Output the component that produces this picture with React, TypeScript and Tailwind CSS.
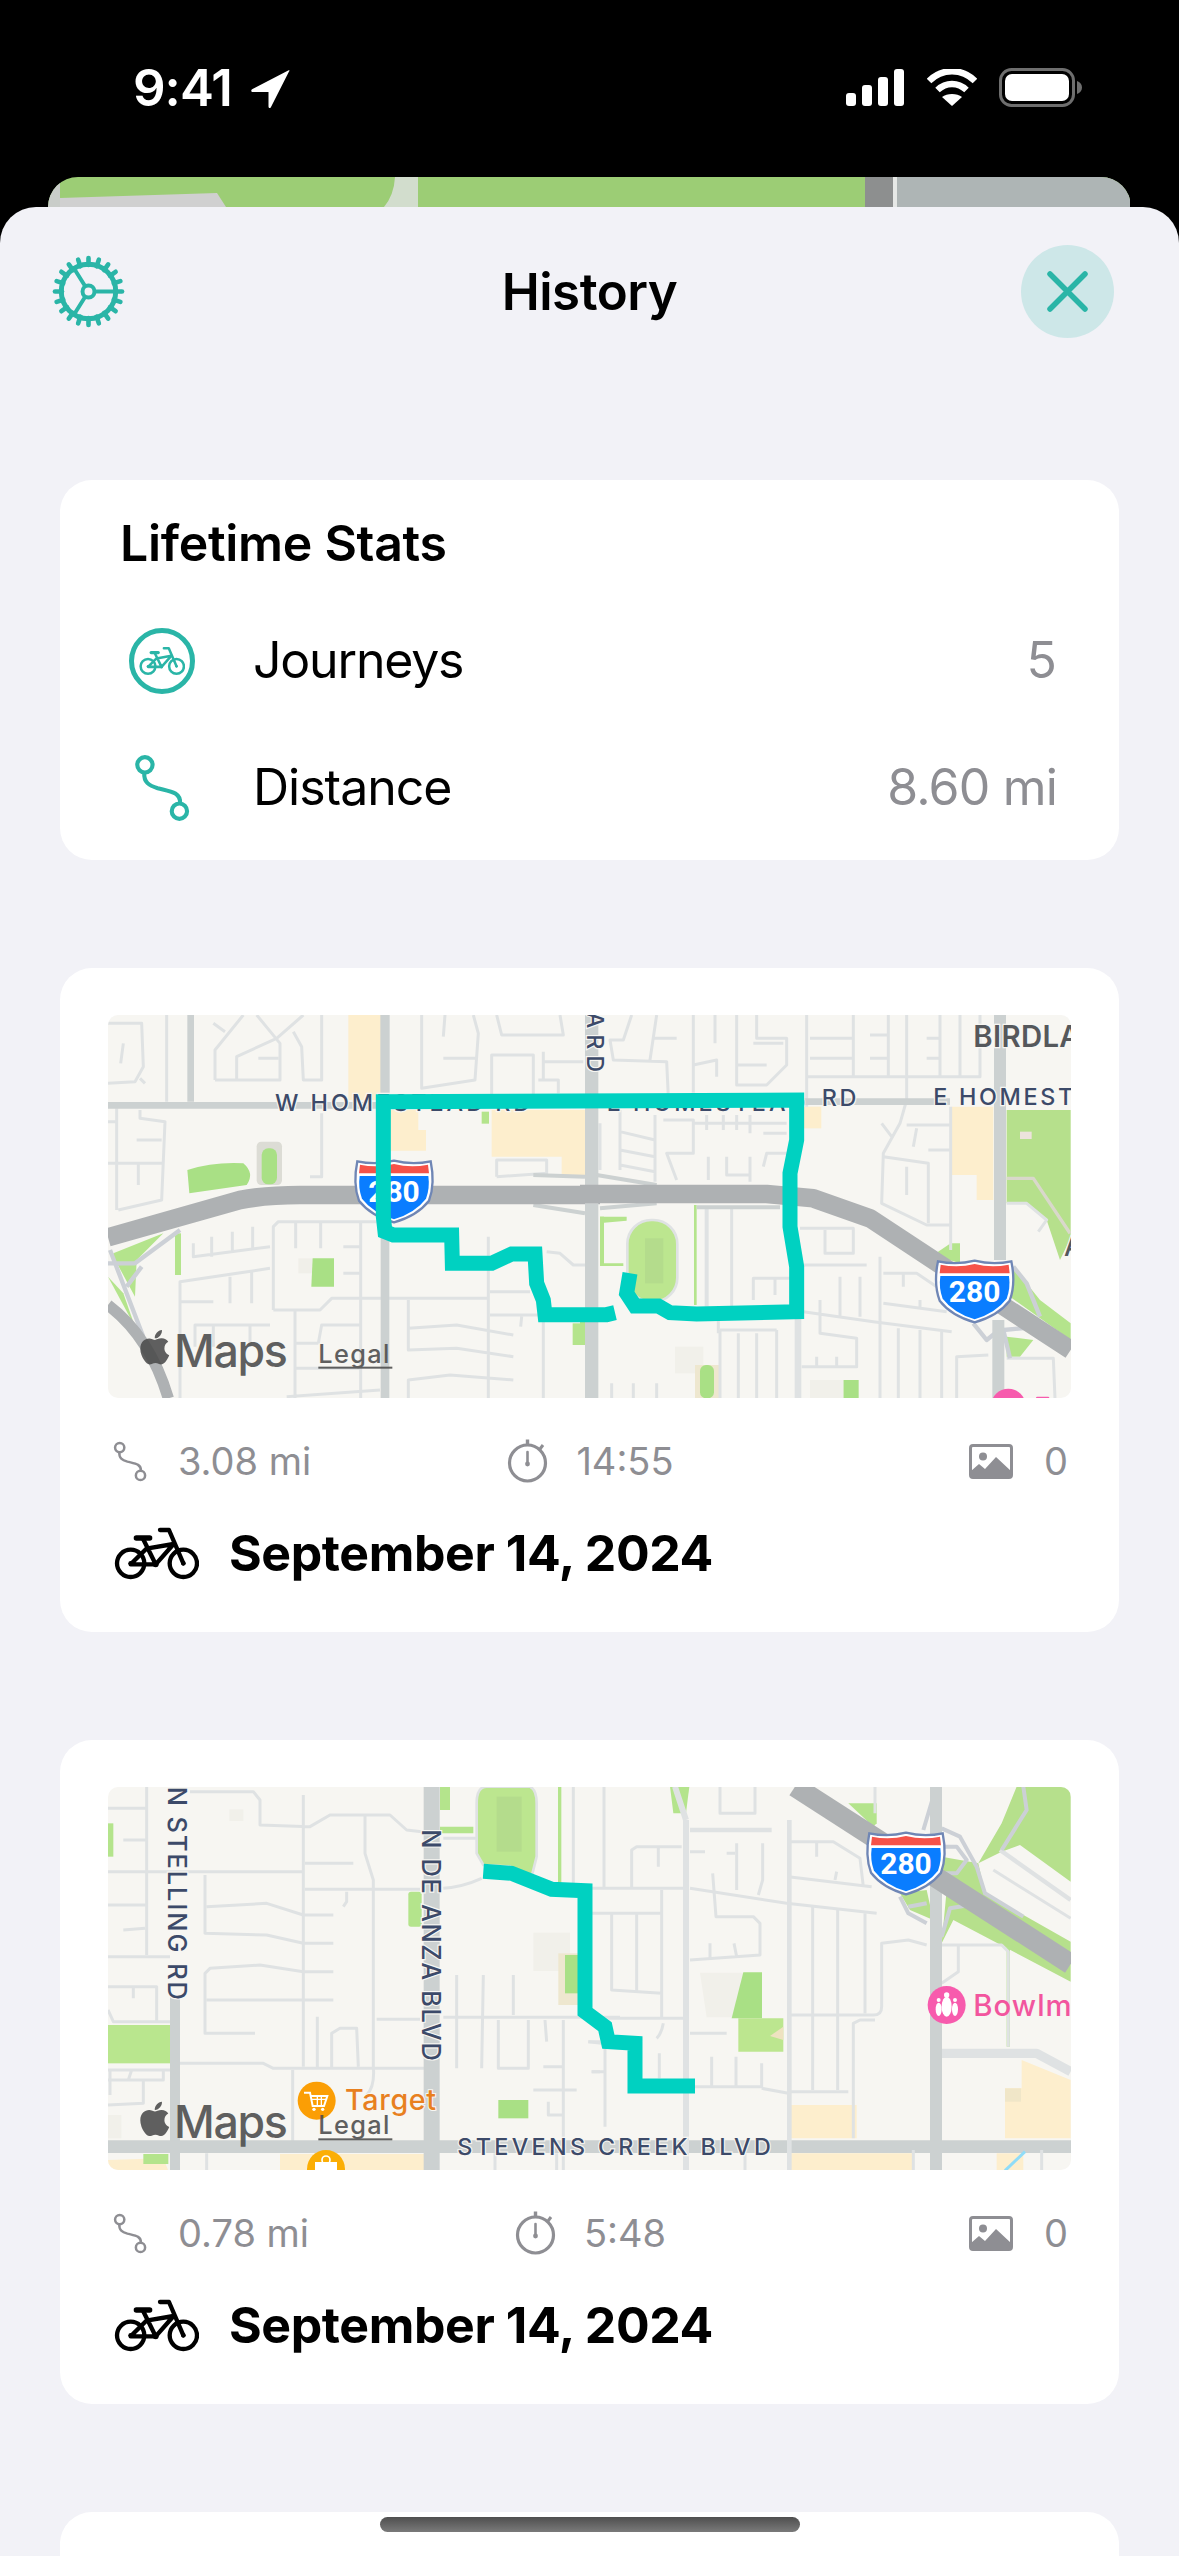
import type { ReactNode } from "react";

const TEAL = "#2ab5a7";
const ROUTE = "#00d1c1";
const MINOR = "#dfe2e3";
const MAJOR = "#ccd1d1";
const HIGHWAY = "#aeb1b3";
const GREEN = "#b4e48c";
const LOT = "#fdeecd";
const LABEL = "#3c4a69";
const LAND = "#f7f6f2";

function Road({ d, w = 9, c = MINOR }: { d: string; w?: number; c?: string }) {
  return <path d={d} fill="none" stroke={c} strokeWidth={w} strokeLinejoin="round" />;
}

function Label({ x, y, size = 70, fill = LABEL, spacing = 10, rotate, weight = 500, children }: {
  x: number;
  y: number;
  size?: number;
  fill?: string;
  spacing?: number;
  rotate?: boolean;
  weight?: number;
  children: ReactNode;
}) {
  return (
    <text
      transform={`translate(${x} ${y})${rotate ? " rotate(90)" : ""}`}
      fontFamily="Inter, sans-serif"
      fontSize={size}
      fontWeight={weight}
      letterSpacing={spacing}
      fill={fill}
      stroke={LAND}
      strokeWidth={7}
      paintOrder="stroke"
    >
      {children}
    </text>
  );
}

function Shield({ x, y }: { x: number; y: number }) {
  return (
    <g transform={`translate(${x} ${y})`}>
      <path d="M-110 -88Q-55 -76 0 -90Q55 -76 110 -88Q124 -20 105 30Q70 75 0 95Q-70 75 -105 30Q-124 -20 -110 -88Z" fill="#fff" stroke="#6f86b5" strokeWidth="7" />
      <path d="M-103 -44H103Q108 -8 96 24Q64 66 0 86Q-64 66 -96 24Q-108 -8 -103 -44Z" fill="#0a7dff" />
      <path d="M-102 -78Q-50 -68 0 -80Q50 -68 102 -78L105 -52H-105Z" fill="#f65249" />
      <text x="0" y="33" textAnchor="middle" fontFamily="Roboto, sans-serif" fontWeight={700} fontSize="90" fill="#fff">280</text>
    </g>
  );
}

function MapsMark({ dy }: { dy: number }) {
  return (
    <g transform={`translate(0 ${dy})`} fill="#4b4b4b" opacity="0.88">
      <path
        transform="translate(120 983) scale(0.23)"
        d="M318.7 268.7c-.2-36.7 16.4-64.4 50-84.8-18.8-26.9-47.2-41.7-84.7-44.6-35.5-2.8-74.3 20.7-88.5 20.7-15 0-49.4-19.7-76.4-19.7C63.3 141.2 4 184.8 4 273.5q0 39.3 14.4 81.2c12.8 36.7 59 126.7 107.2 125.2 25.2-.6 43-17.9 75.8-17.9 31.8 0 48.3 17.9 76.4 17.9 48.6-.7 90.4-82.5 102.6-119.3-65.2-30.7-61.7-90-61.7-91.9zm-56.6-164.2c27.3-32.4 24.8-61.9 24-72.5-24.1 1.4-52 16.4-67.9 34.9-17.5 19.8-27.8 44.3-25.6 71.9 26.1 2 49.9-11.4 69.5-34.3z"
      />
      <text x="222" y="1100" fontFamily="Inter, sans-serif" fontWeight={500} fontSize="134" letterSpacing="-4">Maps</text>
      <text x="655" y="1088" fontFamily="Inter, sans-serif" fontWeight={500} fontSize="76" letterSpacing="4">Legal</text>
      <rect x="655" y="1100" width="222" height="6" />
    </g>
  );
}

function RouteLine({ d }: { d: string }) {
  return <path d={d} fill="none" stroke={ROUTE} strokeWidth="45" strokeLinejoin="miter" />;
}

function HomesteadMap() {
  return (
    <svg viewBox="0 0 963 383" className="block h-[383px] w-[963px]">
      <rect width="963" height="383" fill={LAND} />
      <g transform="translate(-8 -15) scale(0.33333)">
        {/* left half */}
        <rect x="745" y="45" width="100" height="255" fill={LOT} />
        <path d="M870 330H955V390H978V452H870Z" fill={LOT} />
        <path d="M1175 330H1455V525L1385 530V470H1175Z" fill={LOT} />
        <path d="M262 510Q340 485 430 490Q465 520 440 555L320 572L268 580Z" fill="#a9e085" />
        <rect x="470" y="425" width="76" height="130" rx="14" fill="#dcdcd5" />
        <rect x="485" y="445" width="46" height="108" rx="20" fill="#a9e085" />
        <rect x="595" y="775" width="45" height="45" fill="#f0efe9" />
        <path d="M638 775H702V860H634Z" fill="#a9e085" />
        <path d="M40 760L190 700L110 780L105 890L40 770Z" fill={GREEN} />
        <path d="M24 830L105 980L70 880Z" fill={GREEN} />
        <rect x="225" y="700" width="18" height="125" fill={GREEN} />
        <rect x="1145" y="335" width="22" height="36" fill={GREEN} />
        <rect x="1418" y="970" width="38" height="65" fill={GREEN} />
        <Road d="M200 45V305M24 250L105 245L130 200L125 70H24M70 130L62 190M120 235L135 250" />
        <Road d="M345 240V150L430 45M345 240H540V130L470 45M410 240V170L530 115L610 45M340 70L375 95M580 95L605 140L610 240H665V45M475 175H535" />
        <Road d="M24 365H50M50 325V630M120 330V355L195 365L185 600L55 630M24 490H190M110 420H185M115 490V555M665 340V530H630" />
        <Road d="M280 730V770L510 740M335 710V770M397 695V755M458 680V745M520 930V680L535 665H830M587 670V745M662 670V745M730 740H780M782 670V1195" />
        <Road d="M240 1195V845L510 805M240 905H340M390 830V910M455 810V910M730 820H780M520 930H660L695 895H1165M285 1040V975H510M340 975V1040M450 975V1040M655 1030L665 975H780M585 1030H655M585 930V1195M585 1105H780M560 1190L840 1170" />
        <Road d="M925 900V1050L1070 1045L1240 1070M925 985L1070 975L1240 1005M925 1195V1140L1050 1125L1240 1140M1165 710V1195M1170 875H1290M1170 945H1330V1195M1340 755L1380 760L1420 795H1455M1265 950L1262 980" />
        <Road d="M965 45V265L1125 240L1135 100L1120 45M1035 45L1030 110M1030 175H1130M1175 300V165H1300V300M1190 45L1205 105H1390L1380 45M1315 240H1375V280M1330 155V240M1330 185H1450M1190 530V480H1340V520L1190 530" />
        <Road d="M24 790H105L240 690M30 750L130 1010M80 860L125 800" w={13} c="#ccd0d6" />
        <Road d="M272 45V305" w={20} c={MAJOR} />
        <Road d="M855 45V560" w={28} c={MAJOR} />
        <Road d="M855 700V1195" w={26} c={MAJOR} />
        <Road d="M24 316H840" w={20} c={MAJOR} />
        <Road d="M1475 45V1195" w={38} c={MAJOR} />
        <Road d="M1300 525L1455 530M1300 615L1455 640" w={12} c={MAJOR} />
        <Road d="M24 712L420 600Q500 585 600 585H1500" w={56} c={HIGHWAY} />
        <Road d="M24 915Q150 1010 205 1195" w={34} c={HIGHWAY} />

        {/* right half, coordinates run from the middle of the map */}
        <g transform="translate(1440 0)">
          <path d="M1280 330H1472V715L1440 780L1400 660L1340 610H1280Z" fill="#b6e08c" />
          <rect x="1320" y="395" width="35" height="22" fill="#ede3dc" />
          <path d="M1115 320H1240V600H1190V525H1115Z" fill={LOT} />
          <rect x="672" y="320" width="52" height="65" fill={LOT} />
          <rect x="0" y="330" width="14" height="190" fill={LOT} />
          <rect x="60" y="650" width="12" height="145" fill={GREEN} />
          <path d="M60 650H140V662L72 668ZM60 790H130V798H60Z" fill={GREEN} />
          <rect x="342" y="615" width="8" height="300" fill={GREEN} />
          <rect x="0" y="960" width="15" height="75" fill={GREEN} />
          <rect x="142" y="660" width="150" height="245" rx="72" fill="#bce68f" stroke={MINOR} strokeWidth="8" />
          <rect x="195" y="715" width="55" height="135" fill="#b4dc8c" />
          <rect x="285" y="1040" width="85" height="80" fill="#f1f0ea" />
          <rect x="345" y="1095" width="75" height="100" fill="#eee7cf" />
          <rect x="360" y="1095" width="42" height="100" rx="18" fill="#a9e085" />
          <rect x="790" y="1140" width="46" height="55" fill="#a9e085" />
          <rect x="690" y="1140" width="100" height="55" fill="#f1f0ea" />
          <path d="M1060 765L1112 730L1140 730V790Z" fill={GREEN} />
          <path d="M1300 800L1380 900L1472 970V1020L1290 890ZM1280 1010L1360 1020L1320 1070H1280Z" fill={GREEN} />
          <Road d="M680 320V45M820 230V45M925 230V45M980 45V300L960 370L910 460L905 610L1040 675H1110M1080 230V45M1140 230V45M1200 45V230H680M690 115H820M690 175H820M870 175H925M870 105H925M1040 115H1080M1040 175H1080" />
          <Road d="M530 45V115H620V195L560 255H470V45M520 130H610M470 195H560M340 45V290M405 45V130M340 195L410 180V230M155 45L130 120H90L100 180L260 185L265 290M230 45L210 180M220 115H290" />
          <Road d="M1112 320V750M980 375H1110M1010 385L1000 440M910 470L1045 490V670M1045 450H1110M980 500V585M905 370L935 410" />
          <Road d="M120 330V510M120 395L225 420M120 450L225 470M120 495L225 515V545M225 345V530M250 360H340V460H260L290 540M340 400V370H620M380 345V390M430 345V390M470 345V390M510 345V400M550 400H620M385 470V540M440 470V525H510V470M550 500L560 460H620M510 525V545M60 370V510" />
          <Road d="M660 685H820V760H735V690M660 795H860M900 770V1195M910 820H1010L1070 860M910 910L1100 935M970 820V860M1020 900V920M520 900V835H630M585 835V885" />
          <Road d="M670 935L880 965L1115 995M720 900V1000L830 1015V1100H665M780 830V950M840 830V950M710 1070V1105M770 1070V1105" />
          <Road d="M420 990H590M420 1195V990M475 1000V1195M530 1000V1195M590 990V1195M955 985V1195M1020 990V1195M1085 995V1195M1130 1195V1070L1225 1065M1280 1075H1420L1425 1195M95 1150V1195M160 1150V1195M230 1150V1195M455 620V920M415 960V1000" />
          <Road d="M380 620V920" w={12} />
          <Road d="M654 950V1195" w={20} />
          <Road d="M1280 535H1360L1470 700" w={10} c="#d9d8cb" />
          <Road d="M1280 610H1340L1400 660L1375 695" />
          <Road d="M1300 800L1340 850L1380 950M1180 970L1220 1020L1270 980M1290 1075L1270 990L1380 980" w={13} c="#ccd0d6" />
          <Road d="M35 45V1195" w={40} c={MAJOR} />
          <Road d="M1260 45V780" w={36} c={MAJOR} />
          <Road d="M1255 960V1195" w={36} c={MAJOR} />
          <Road d="M0 305H1110" w={20} c={MAJOR} />
          <Road d="M50 525L230 555M60 625L230 610M350 622H600" w={12} c={MAJOR} />
          <Road d="M0 582H560L700 595L870 655L1090 800L1472 1050" w={56} c={HIGHWAY} />
          <Label x={80} y={333} spacing={9}>E HOMESTEAD</Label>
          <Label x={725} y={318} spacing={8}>RD</Label>
          <Label x={1060} y={316} spacing={8}>E HOMESTEAD</Label>
          <Label x={1180} y={140} size={88} fill="#55585c" spacing={1} weight={600}>BIRDLAND</Label>
          <Label x={20} y={35} rotate spacing={18}>ARD</Label>
          <Shield x={1184} y={872} />
          <circle cx="1285" cy="1218" r="52" fill="#f75bad" />
          <rect x="1368" y="1190" width="40" height="8" rx="4" fill="#f75bad" />
          <Label x={1452} y={768} fill="#55585c" size={80}>A</Label>
        </g>
        <Label x={525} y={333} spacing={9}>W HOMESTEAD RD</Label>
        <Shield x={882} y={572} />
        <MapsMark dy={0} />
        <RouteLine d="M1545 938L1520 944H1335L1330 900L1310 850L1305 762H1235L1175 790H1057L1055 705H880L855 695L850 650V305L2090 300V420L2070 520V680L2090 800V935L1790 942L1710 938L1675 918H1605L1580 880L1590 820" />
      </g>
    </svg>
  );
}

function StevensCreekMap() {
  return (
    <svg viewBox="0 0 963 383" className="block h-[383px] w-[963px]">
      <rect width="963" height="383" fill={LAND} />
      <g transform="translate(-8 -7) scale(0.33333)">
        {/* left half */}
        <rect x="1020" y="20" width="30" height="70" fill={GREEN} />
        <path d="M1020 140H1120V160H1020Z" fill={GREEN} />
        <path d="M1130 70Q1130 20 1160 20H1290Q1310 30 1310 70V230L1295 290L1230 260L1150 255L1130 220Z" fill="#bce68f" stroke={MINOR} strokeWidth="8" />
        <rect x="1190" y="50" width="75" height="165" fill="#b4dc8c" />
        <rect x="1374" y="20" width="10" height="290" fill={GREEN} />
        <rect x="24" y="130" width="16" height="100" fill={GREEN} />
        <rect x="24" y="735" width="186" height="115" fill="#b9e68e" />
        <rect x="925" y="335" width="40" height="105" rx="8" fill={GREEN} />
        <rect x="1195" y="960" width="90" height="55" fill="#a9e085" />
        <rect x="1300" y="458" width="110" height="115" fill="#f1f0ea" />
        <rect x="1375" y="520" width="65" height="155" fill="#eee7cf" />
        <rect x="1395" y="525" width="42" height="115" fill="#a9e085" />
        <rect x="388" y="88" width="42" height="35" fill="#f1f0ea" />
        <rect x="24" y="1005" width="40" height="70" fill="#f1f0ea" />
        <path d="M540 1122H975V1172H540ZM24 1140L190 1135L205 1172H24Z" fill={LOT} />
        <rect x="130" y="1122" width="75" height="30" fill={GREEN} />
        <Road d="M140 20V525M24 85H140M70 180H140M24 275H610M24 375H140M70 450L135 445M24 530H210" />
        <Road d="M270 35H460L480 60V135L630 140L690 105H870L920 150L965 155M610 45V860M615 250H760M615 328H960M1030 325Q1090 320 1145 295M1030 175H1130M795 105V220L820 300V860Q825 920 800 945M740 335V365L730 380" />
        <Road d="M315 285V460L500 465L610 490H700M320 380L500 370L610 405H700M610 575H700M610 660H700M320 660H610M610 575L480 555L330 565L315 580V760H465M24 620H170V725M100 620V655M24 690L40 725H210" />
        <Road d="M652 710V860M695 860V760L720 745H770L775 860M240 850H490L520 865H975M578 870V1085M830 718H960M1030 712H1560M1070 585V865M1150 585L1145 865M1240 585V705M1195 720V865H1285V720M1335 720L1340 785M1390 720V1172M1330 860H1390M1300 930H1430M1345 965V1005H1390M1465 785H1500M1420 20V310M1475 875H1500" />
        <Road d="M24 870H210M24 900H190V870M130 900V970L24 975M95 870L85 900M30 870V945M320 1120V1172M1185 1120V1172M1370 1120V1172" />
        <Road d="M225 650V1172" w={30} c={MAJOR} />
        <Road d="M995 20V1172" w={48} c={MAJOR} />
        <Road d="M24 1100H2913" w={38} c={MAJOR} />

        {/* right half */}
        <g transform="translate(1440 0)">
          <path d="M630 975H830V1075H630ZM630 1120H1000V1172H630Z" fill={LOT} />
          <path d="M1325 840L1472 900V1075H1275V925H1325Z" fill={LOT} />
          <rect x="1275" y="925" width="48" height="40" fill="#f0e6c8" />
          <rect x="1250" y="1120" width="80" height="52" fill={LOT} />
          <path d="M360 578H490V712H380Z" fill="#f1f0ea" />
          <path d="M490 577H546V715H455Z" fill="#a9e085" />
          <path d="M475 715H610V815H475Z" fill="#bce68f" />
          <path d="M570 768L610 740V780Z" fill="#eee2c0" />
          <path d="M270 20H328L318 100L280 100Z" fill={GREEN} />
          <path d="M805 70L890 70V130L880 140Z" fill={GREEN} />
          <path d="M1310 20H1472V305L1320 195L1265 215L1195 250L1265 130Z" fill="#b6e08c" />
          <path d="M1085 230L1195 250L1215 340L1472 485V520L1085 280Z" fill="#b6e08c" />
          <path d="M1120 420L1472 605L1472 520L1100 330L1085 490Z" fill="#b6e08c" />
          <path d="M960 340L1040 330L1060 420L990 390Z" fill="#b6e08c" />
          <rect x="1280" y="500" width="10" height="300" fill={GREEN} />
          <Road d="M72 20V320M20 325H310M330 325L620 370L890 400M155 325V210L170 200H305M235 205V260M375 215H330M440 220H465M470 190V330M548 190V300L535 345" />
          <Road d="M398 280L408 410H520L540 430V525L330 540M390 490V535M462 490L470 530M625 185H760L840 235L850 320M710 185V230M625 290L875 320M770 275L765 300M698 380V930M773 390V930M855 400V700M625 705H880Q905 705 905 680V490L985 480L1040 495" />
          <Road d="M820 1075V730L840 720H885M625 935H805M545 925L625 940M95 400V630L245 640M170 400V635M35 400H245M245 330V710M85 715H310M250 730Q245 760 230 775M330 760H440M395 830V925M468 830V925M545 850V925M330 920H545M238 820V895M75 805V1040M35 875H75M25 785L65 790" />
          <Road d="M420 20V100H525V20M1085 495H1265L1285 515V800M1135 495V575L1085 610M1000 1110V1172M1385 1110V1172M495 1120V1172M885 20V100" />
          <Road d="M628 120V1172" w={14} />
          <Road d="M318 120V1172M285 20L318 120" w={18} />
          <Road d="M330 150H575" w={14} />
          <Road d="M1085 820H1370L1472 875" w={28} />
          <Road d="M1260 210L1472 360" w={13} />
          <Road d="M1240 270L1472 415" w={9} />
          <Road d="M1030 150L1060 50M1085 145L1140 170L1190 260L1215 340L1330 410M1090 200H1130L1160 240L1130 280H1090M960 350L985 400L1040 430M985 380L1040 370M1085 470L1110 385L1170 375M1265 210L1340 90L1330 20" w={12} c="#ccd0d6" />
          <Road d="M1068 20V1172" w={36} c={MAJOR} />
          <Road d="M645 20L1472 552" w={62} c={HIGHWAY} />
          <Road d="M1335 1115L1275 1172" w={9} c="#8fdcf8" />
          <Shield x={978} y={248} />
          {/* Bowlmor pin */}
          <circle cx="1100" cy="675" r="57" fill="#f75bad" />
          <g fill="#fff">
            <ellipse cx="1100" cy="680" rx="15" ry="30" />
            <circle cx="1100" cy="645" r="8" />
            <ellipse cx="1076" cy="688" rx="9" ry="20" />
            <circle cx="1076" cy="660" r="6" />
            <ellipse cx="1125" cy="688" rx="9" ry="20" />
            <circle cx="1125" cy="660" r="6" />
          </g>
          <text x="1180" y="708" fontFamily="Inter, sans-serif" fontWeight={500} fontSize="88" letterSpacing="3" fill="#f2559e">Bowlm</text>
        </g>

        <Label x={205} y={20} rotate size={76} spacing={6}>N STELLING RD</Label>
        <Label x={965} y={148} rotate size={76} spacing={5}>N DE ANZA BLVD</Label>
        <Label x={1072} y={1125} spacing={10}>STEVENS CREEK BLVD</Label>

        {/* Target pins */}
        <circle cx="650" cy="962" r="57" fill="#fb9e05" />
        <path d="M612 938H630L638 978H672L682 948H634" fill="none" stroke="#fff" strokeWidth="6" />
        <path d="M636 958H678M652 948V976M664 948V976" stroke="#fff" strokeWidth="4" />
        <circle cx="642" cy="988" r="5" fill="#fff" />
        <circle cx="668" cy="988" r="5" fill="#fff" />
        <text x="735" y="990" fontFamily="Inter, sans-serif" fontWeight={500} fontSize="86" letterSpacing="2" fill="#e8801f" stroke={LAND} strokeWidth="6" paintOrder="stroke">Target</text>
        <circle cx="678" cy="1167" r="57" fill="#fbae05" />
        <rect x="645" y="1146" width="66" height="40" fill="#fff" />
        <circle cx="678" cy="1140" r="12" fill="none" stroke="#fff" strokeWidth="5" />
        <MapsMark dy={-25} />
        <RouteLine d="M1150 274L1235 280L1355 328L1455 332V695L1515 740L1525 785L1605 790V918H1785" />
      </g>
    </svg>
  );
}

function RouteIcon({ className }: { className: string }) {
  return (
    <svg viewBox="38 396 175 213" className={className} fill="none" stroke="currentColor" strokeWidth="13">
      <circle cx="72" cy="430" r="24" />
      <circle cx="180" cy="575" r="24" />
      <path d="M70 455C68 485 85 495 112 503C150 513 184 515 182 550" />
    </svg>
  );
}

function BikeIcon({ className, stroke = 13 }: { className: string; stroke?: number }) {
  return (
    <svg viewBox="25 30 255 165" className={className} fill="none" stroke="currentColor" strokeWidth={stroke} strokeLinejoin="round" strokeLinecap="round">
      <circle cx="75" cy="142" r="41" />
      <circle cx="233" cy="142" r="41" />
      <path d="M92 66H132" strokeWidth={stroke + 3} />
      <path d="M163 42H190L233 142" />
      <path d="M112 68L150 145H75L122 98L204 84L150 145" />
      <circle cx="150" cy="145" r="9" fill="currentColor" stroke="none" />
      <circle cx="75" cy="142" r="7" fill="currentColor" stroke="none" />
      <circle cx="233" cy="142" r="7" fill="currentColor" stroke="none" />
    </svg>
  );
}

function TimerIcon() {
  return (
    <svg viewBox="0 0 41 44" className="h-[44px] w-[41px] text-[#8e8e93]" fill="none" stroke="currentColor">
      <circle cx="20.5" cy="24" r="18" strokeWidth="3.2" />
      <path d="M20.5 0.5V6" strokeWidth="3.4" />
      <path d="M36 6L33 10" strokeWidth="3" />
      <path d="M20.5 13V25" strokeWidth="2.6" strokeLinecap="round" />
      <circle cx="20.5" cy="25" r="2.4" fill="currentColor" stroke="none" />
    </svg>
  );
}

function PhotoIcon() {
  return (
    <svg viewBox="0 0 44 35" className="h-[35px] w-[44px] text-[#8e8e93]">
      <rect x="1.5" y="1.5" width="41" height="32" rx="2.5" fill="none" stroke="currentColor" strokeWidth="3" />
      <circle cx="14" cy="12.5" r="4" fill="currentColor" />
      <path d="M2 34V27L10 20L16 25L27 13L42 27V34Z" fill="currentColor" />
    </svg>
  );
}

function GearIcon() {
  const teeth = Array.from({ length: 20 }, (_, i) => i * 18);
  return (
    <svg viewBox="36 28 220 220" className="-ml-[13px] h-[73px] w-[73px]" fill="none" stroke={TEAL}>
      <circle cx="146" cy="138" r="82" strokeWidth="15" />
      {teeth.map((deg) => (
        <path key={deg} d="M146 58V37" strokeWidth="14" strokeLinecap="round" transform={`rotate(${deg} 146 138)`} />
      ))}
      <circle cx="146" cy="138" r="18" strokeWidth="12" />
      <path d="M165 138H226M136 122L102 68M136 154L102 208" strokeWidth="12" />
    </svg>
  );
}

function LocationArrow() {
  return (
    <svg viewBox="0 0 39 38" className="mt-[1px] h-[38px] w-[39px]" fill="#fff">
      <path d="M38 1.5C38.8 0.6 38.6 0 37.2 0.5L1.5 19C-0.5 20 0 22 2 22H17.5V36.5C17.5 38.4 19.3 38.6 20 37Z" />
    </svg>
  );
}

function StatusIcons() {
  return (
    <div className="flex items-center">
      <svg viewBox="0 0 58 37" className="h-[37px] w-[58px]" fill="#fff">
        <rect x="0" y="24" width="10" height="13" rx="3" />
        <rect x="16" y="16" width="10" height="21" rx="3" />
        <rect x="32" y="8" width="10" height="29" rx="3" />
        <rect x="48" y="0" width="10" height="37" rx="3" />
      </svg>
      <svg viewBox="0 0 50 37" className="ml-[23px] h-[37px] w-[50px]" fill="none" stroke="#fff">
        <path d="M2 12C15 -1 35 -1 48 12" strokeWidth="6.5" />
        <path d="M10.5 21C19 13 31 13 39.5 21" strokeWidth="6.5" />
        <path d="M25 37L15 28C20 24 30 24 35 28Z" fill="#fff" stroke="none" />
      </svg>
      <svg viewBox="0 0 83 39" className="ml-[22px] h-[39px] w-[83px]">
        <rect x="1.5" y="1.5" width="73" height="36" rx="11" fill="none" stroke="#6e6e6e" strokeWidth="3" />
        <rect x="6" y="6" width="64" height="27" rx="7" fill="#fff" />
        <path d="M78 13C81 14 83 16.5 83 19.5C83 22.5 81 25 78 26Z" fill="#6e6e6e" />
      </svg>
    </div>
  );
}

function StatusBar() {
  return (
    <div className="flex h-[177px] shrink-0 items-start justify-between pt-[68px] pr-[97px] pl-[133px]">
      <div className="flex items-center gap-[19px]">
        <span className="text-[51px] leading-[40px] font-semibold tracking-[-1px] text-white">9:41</span>
        <LocationArrow />
      </div>
      <StatusIcons />
    </div>
  );
}

function BehindMap() {
  return (
    <div className="mx-[48px] h-[30px] shrink-0 overflow-hidden rounded-t-[30px]">
      <svg viewBox="48 177 1082 30" className="block h-[30px] w-[1082px]">
        <rect x="48" y="177" width="1082" height="30" fill="#9ccd75" />
        <rect x="48" y="177" width="12" height="30" fill="#c9cdc9" />
        <path d="M60 198L217 193L226 207H60Z" fill="#d0d0d0" />
        <path d="M395 177H418V207H384Q394 195 395 177Z" fill="#d2ddcd" />
        <rect x="865" y="177" width="28" height="30" fill="#8d8f8f" />
        <rect x="893" y="177" width="4" height="30" fill="#e6e8e6" />
        <rect x="897" y="177" width="233" height="30" fill="#aeb5b5" />
      </svg>
    </div>
  );
}

function Header() {
  return (
    <div className="grid grid-cols-[1fr_auto_1fr] items-center px-[65px] pt-[38px]">
      <div className="justify-self-start">
        <GearIcon />
      </div>
      <h1 className="text-[51px] leading-[60px] font-semibold tracking-[-0.5px] text-black">History</h1>
      <button className="flex h-[93px] w-[93px] items-center justify-center justify-self-end rounded-full bg-[#cde7e8]">
        <svg viewBox="0 0 41 41" className="h-[41px] w-[41px]" fill="none" stroke={TEAL} strokeWidth="5.5" strokeLinecap="round">
          <path d="M3 3L38 38M38 3L3 38" />
        </svg>
      </button>
    </div>
  );
}

function LifetimeStats() {
  return (
    <section className="mx-[60px] mt-[142px] h-[380px] rounded-[32px] bg-white pt-[33px] pr-[62px] pl-[60px]">
      <h2 className="mb-[24px] text-[50px] leading-[60px] font-semibold tracking-[-0.3px] text-black">Lifetime Stats</h2>
      <div className="flex h-[127px] items-center text-[50px]">
        <div className="mr-[58px] ml-[9px] flex h-[66px] w-[66px] items-center justify-center rounded-full border-[5px] border-[#2ab5a7] text-[#2ab5a7]">
          <BikeIcon className="h-[30px] w-[46px]" stroke={14} />
        </div>
        <span className="flex-1 tracking-[-1.2px] text-black">Journeys</span>
        <span className="text-[#8e8e93]">5</span>
      </div>
      <div className="flex h-[127px] items-center text-[50px]">
        <div className="mr-[58px] ml-[9px] flex w-[66px] justify-center text-[#2ab5a7]">
          <RouteIcon className="h-[68px] w-[56px]" />
        </div>
        <span className="flex-1 tracking-[-1px] text-black">Distance</span>
        <span className="tracking-[-0.8px] text-[#8e8e93]">8.60 mi</span>
      </div>
    </section>
  );
}

function JourneyCard({ map, distance, time }: { map: ReactNode; distance: string; time: string }) {
  return (
    <section className="mx-[60px] mt-[108px] h-[664px] rounded-[32px] bg-white px-[48px] pt-[47px]">
      <div className="h-[383px] overflow-hidden rounded-[10px]">{map}</div>
      <div className="mt-[41px] grid h-[44px] grid-cols-3 items-center pr-[3px] pl-[5px] text-[38px] leading-[44px] text-[#8e8e93]">
        <div className="flex items-center gap-[31px] justify-self-start">
          <RouteIcon className="h-[41px] w-[34px]" />
          <span>{distance}</span>
        </div>
        <div className="flex items-center gap-[28px] justify-self-center">
          <TimerIcon />
          <span>{time}</span>
        </div>
        <div className="flex items-center gap-[31px] justify-self-end">
          <PhotoIcon />
          <span>0</span>
        </div>
      </div>
      <div className="mt-[42px] flex h-[56px] items-center gap-[30px] pl-[6px] text-black">
        <BikeIcon className="h-[55px] w-[85px]" />
        <span className="text-[50px] font-bold tracking-[-0.4px]">September 14, 2024</span>
      </div>
    </section>
  );
}

export default function App() {
  return (
    <div className="relative flex h-[2556px] w-[1179px] flex-col overflow-hidden bg-black font-[Inter,sans-serif]">
      <StatusBar />
      <BehindMap />
      <main className="min-h-0 flex-1 rounded-t-[36px] bg-[#f2f2f7]">
        <Header />
        <LifetimeStats />
        <JourneyCard map={<HomesteadMap />} distance="3.08 mi" time="14:55" />
        <JourneyCard map={<StevensCreekMap />} distance="0.78 mi" time="5:48" />
        <section className="mx-[60px] mt-[108px] h-[300px] rounded-[32px] bg-white" />
      </main>
      <div className="absolute top-[2517px] left-[380px] h-[15px] w-[420px] rounded-full bg-gradient-to-b from-[#4f4f4f] to-[#7a7a7a]" />
    </div>
  );
}
